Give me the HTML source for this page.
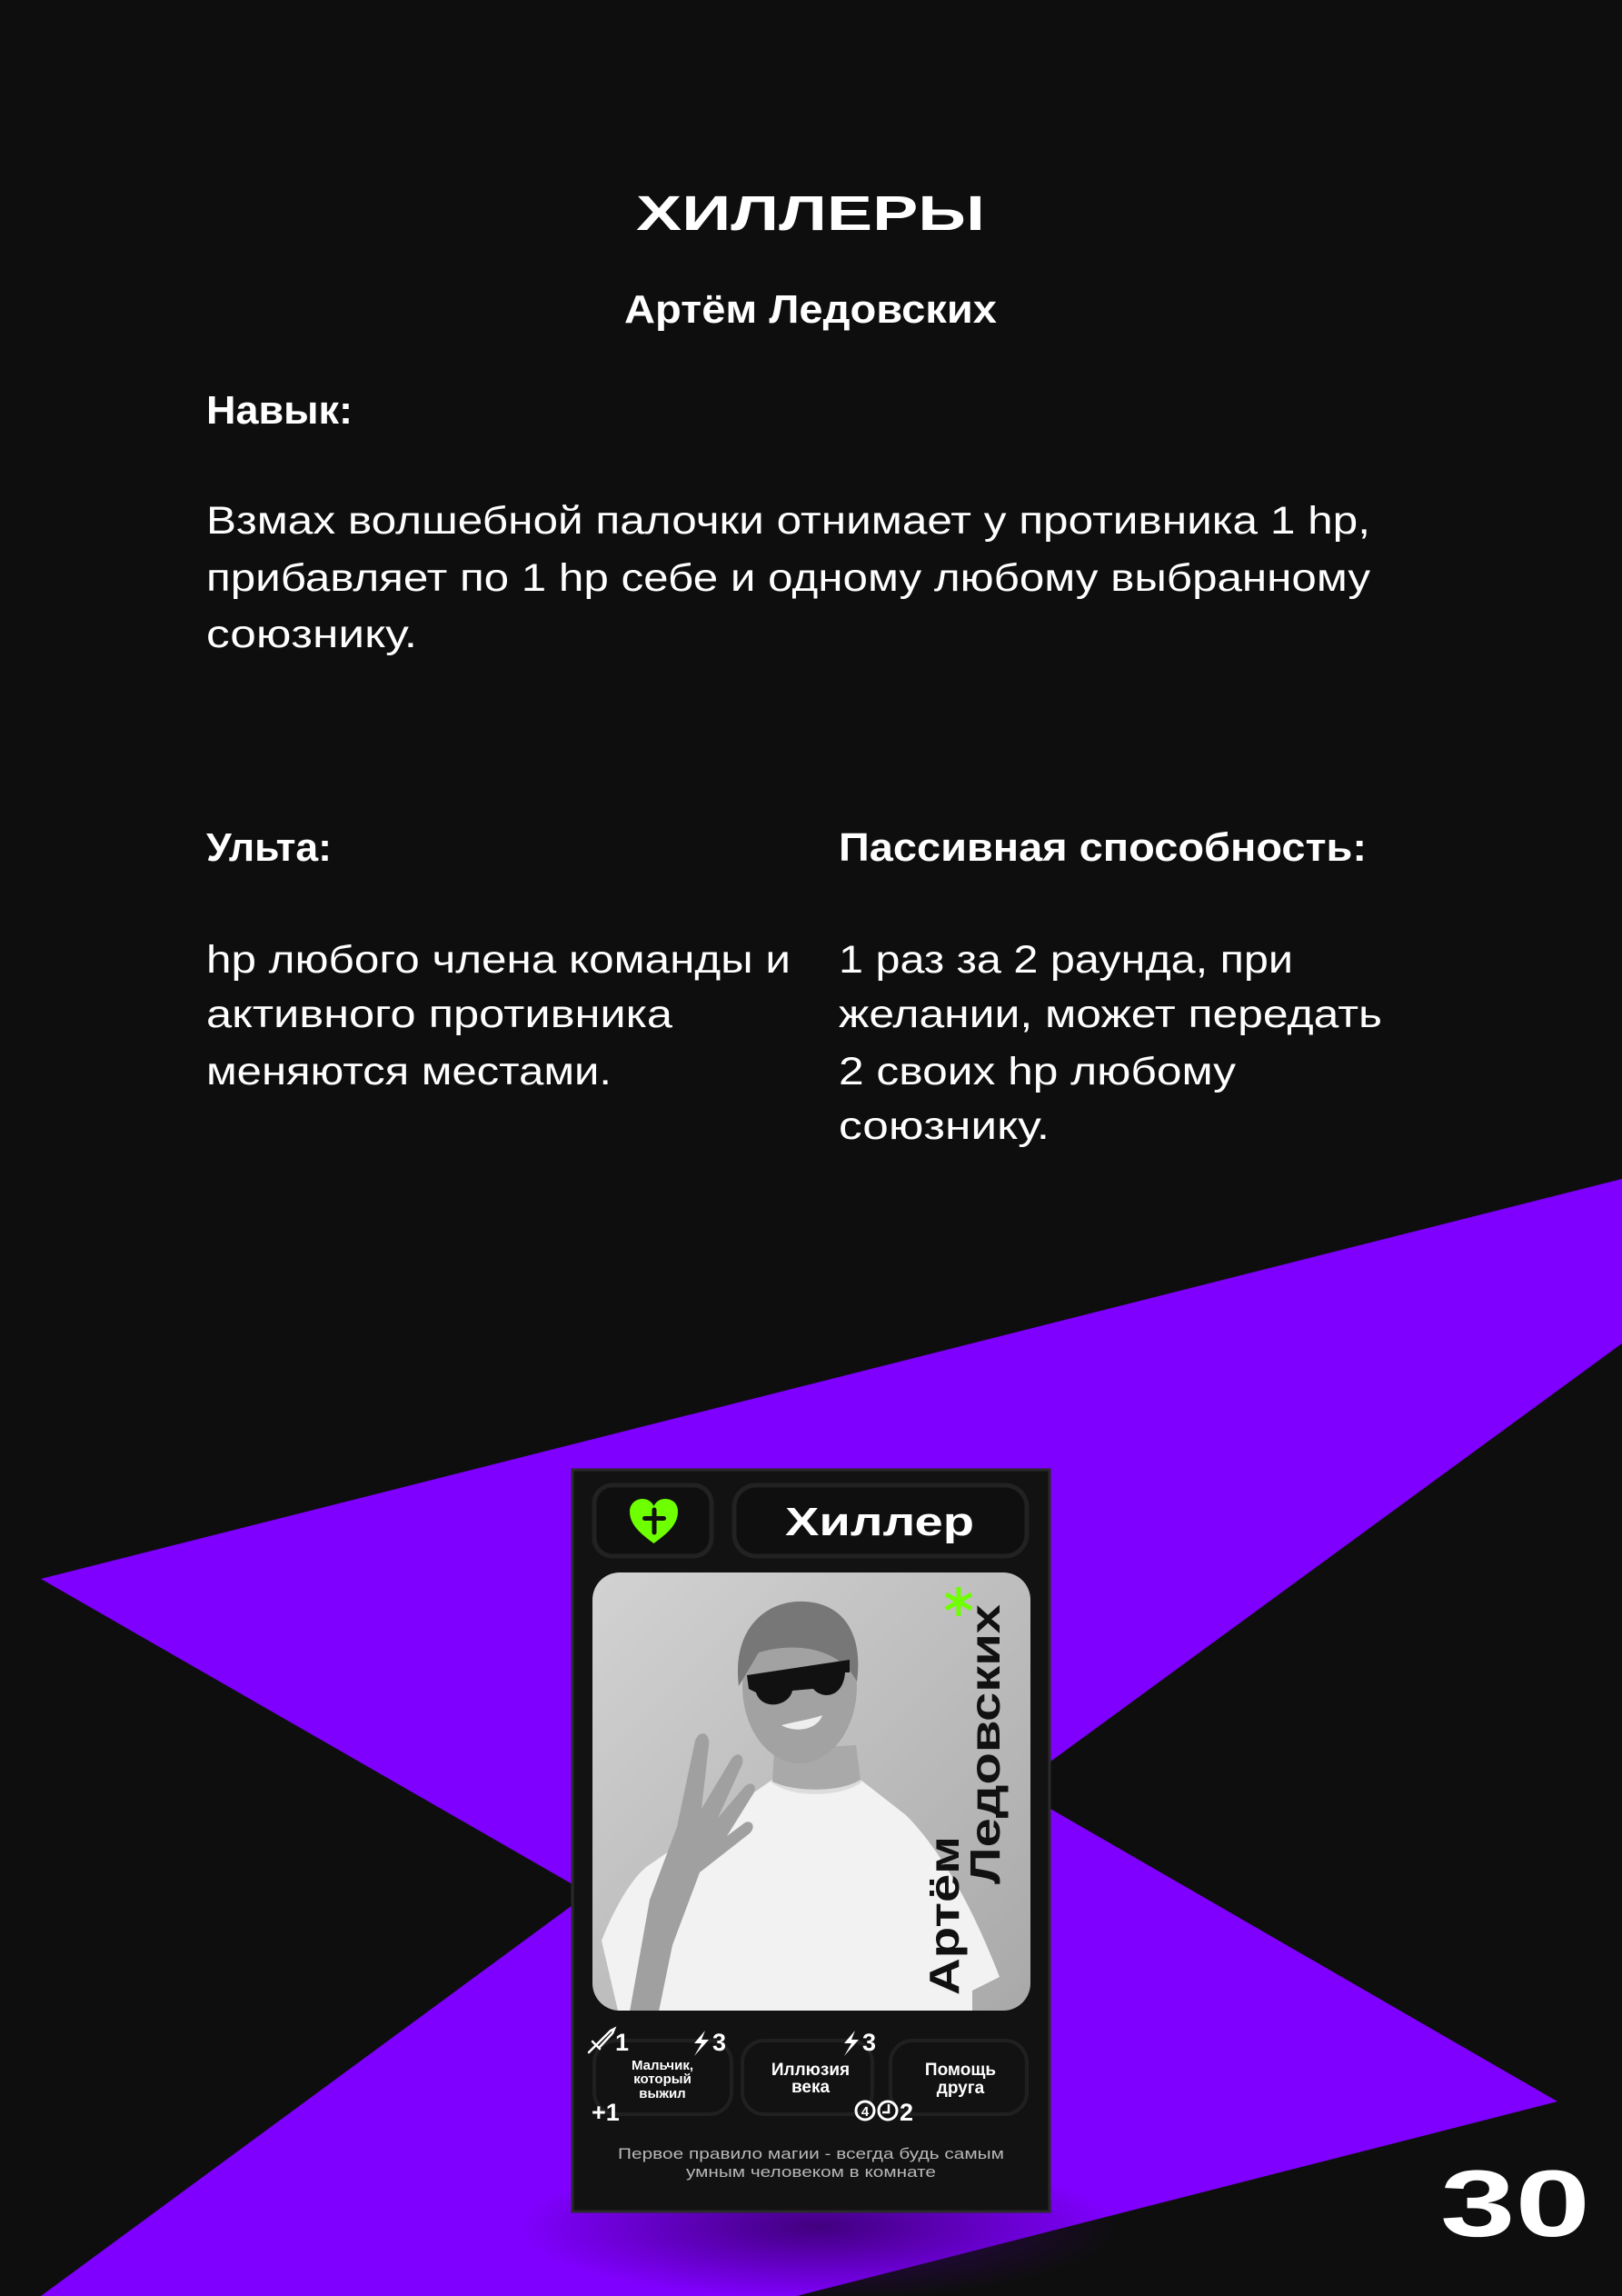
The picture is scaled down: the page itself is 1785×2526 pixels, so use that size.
<!DOCTYPE html>
<html><head><meta charset="utf-8"><style>
html,body{margin:0;padding:0;background:#0e0e0e;}
svg{display:block;}
text{font-family:"Liberation Sans",sans-serif;}
</style></head><body>
<svg width="1785" height="2526" viewBox="0 0 1785 2526" xmlns="http://www.w3.org/2000/svg">
<defs>
<linearGradient id="bg" x1="0" y1="0" x2="1" y2="1">
<stop offset="0" stop-color="#d2d2d2"/><stop offset="1" stop-color="#a9a9a9"/>
</linearGradient>
<clipPath id="ph"><rect x="652" y="1730" width="482" height="482" rx="30"/></clipPath>
<radialGradient id="glow" cx="0.5" cy="0.5" r="0.5">
<stop offset="0" stop-color="#3a0070" stop-opacity="0.9"/><stop offset="1" stop-color="#3a0070" stop-opacity="0"/>
</radialGradient>
</defs>
<rect width="1785" height="2526" fill="#0e0e0e"/>
<polygon points="45,1737 1785,1297 1785,1478 1156,1938 900,2050 630,2073" fill="#8000ff"/>
<polygon points="900,1950 1156,1990 1714,2312 877,2526 45,2526 630,2096" fill="#8000ff"/>
<ellipse cx="900" cy="2450" rx="330" ry="80" fill="url(#glow)"/>

<text x="700" y="253" font-size="54" font-weight="bold" fill="#fff" textLength="384" lengthAdjust="spacingAndGlyphs">ХИЛЛЕРЫ</text>
<text x="687" y="355" font-size="44" font-weight="bold" fill="#fff" textLength="410" lengthAdjust="spacingAndGlyphs">Артём Ледовских</text>
<text x="227" y="466" font-size="44" font-weight="bold" fill="#fff" textLength="161" lengthAdjust="spacingAndGlyphs">Навык:</text>
<g font-size="43" fill="#fff">
<text x="227" y="587" textLength="1281" lengthAdjust="spacingAndGlyphs">Взмах волшебной палочки отнимает у противника 1 hp,</text>
<text x="227" y="650" textLength="1281" lengthAdjust="spacingAndGlyphs">прибавляет по 1 hp себе и одному любому выбранному</text>
<text x="227" y="712" textLength="232" lengthAdjust="spacingAndGlyphs">союзнику.</text>
</g>
<text x="227" y="947" font-size="44" font-weight="bold" fill="#fff" textLength="138" lengthAdjust="spacingAndGlyphs">Ульта:</text>
<text x="923" y="947" font-size="44" font-weight="bold" fill="#fff" textLength="581" lengthAdjust="spacingAndGlyphs">Пассивная способность:</text>
<g font-size="43" fill="#fff">
<text x="227" y="1070" textLength="643" lengthAdjust="spacingAndGlyphs">hp любого члена команды и</text>
<text x="227" y="1130" textLength="513" lengthAdjust="spacingAndGlyphs">активного противника</text>
<text x="227" y="1193" textLength="446" lengthAdjust="spacingAndGlyphs">меняются местами.</text>
<text x="923" y="1070" textLength="500" lengthAdjust="spacingAndGlyphs">1 раз за 2 раунда, при</text>
<text x="923" y="1130" textLength="598" lengthAdjust="spacingAndGlyphs">желании, может передать</text>
<text x="923" y="1193" textLength="437" lengthAdjust="spacingAndGlyphs">2 своих hp любому</text>
<text x="923" y="1253" textLength="232" lengthAdjust="spacingAndGlyphs">союзнику.</text>
</g>

<rect x="630" y="1617" width="525" height="816" fill="#121212" stroke="#2a2a2a" stroke-width="3"/>
<rect x="654" y="1634" width="129" height="78" rx="20" fill="#0f0f0f" stroke="#222" stroke-width="5"/>
<rect x="808" y="1634" width="322" height="78" rx="24" fill="#0f0f0f" stroke="#222" stroke-width="5"/>
<path d="M719.5,1698 C706,1688 693,1678 693,1663 C693,1654 700,1649 707,1649 C713,1649 717,1652 719.5,1657 C722,1652 726,1649 732,1649 C740,1649 746,1654 746,1663 C746,1678 733,1688 719.5,1698 Z" fill="#6eff00"/>
<path d="M720,1661 V1686 M709.5,1670.5 H730.5" stroke="#111" stroke-width="5" stroke-linecap="round"/>
<text x="864" y="1689" font-size="44" font-weight="bold" fill="#fff" textLength="208" lengthAdjust="spacingAndGlyphs">Хиллер</text>

<g clip-path="url(#ph)">
<rect x="652" y="1730" width="482" height="482" fill="url(#bg)"/>
<path d="M850,1958 C870,1972 920,1972 947,1958 L997,1997 C1040,2040 1075,2110 1100,2175 L1070,2190 L1070,2212 L680,2212 L662,2135 C680,2090 700,2060 717,2050 Z" fill="#f2f2f2"/>
<path d="M850,1958 C870,1975 925,1975 947,1958" stroke="#dcdcdc" stroke-width="6" fill="none"/>
<path d="M852,1925 L850,1960 C875,1972 925,1972 947,1958 L942,1920 Z" fill="#a9a9a9"/>
<ellipse cx="880" cy="1855" rx="63" ry="85" fill="#a2a2a2"/>
<path d="M813,1855 C805,1790 845,1760 885,1762 C930,1764 950,1800 943,1850 C925,1815 880,1805 835,1818 Z" fill="#777"/>
<path d="M822,1843 L935,1826 L935,1840 L930,1840 C928,1868 905,1870 895,1858 L872,1860 C868,1878 838,1882 832,1862 L824,1858 Z" fill="#111"/>
<path d="M860,1898 C875,1894 895,1891 905,1887 C900,1903 875,1907 860,1898 Z" fill="#eee"/>
<path d="M693,2213 L715,2090 L745,2010 L765,1915 C770,1902 782,1906 780,1920 L772,1990 L805,1935 C812,1925 822,1932 815,1945 L790,2000 L820,1965 C828,1958 835,1966 828,1975 L800,2020 L820,2005 C828,2002 832,2010 825,2017 L770,2060 L740,2140 L725,2213 Z" fill="#a0a0a0"/>
<text transform="translate(1100,2073) rotate(-90)" font-size="46" font-weight="bold" fill="#111" textLength="308" lengthAdjust="spacingAndGlyphs">Ледовских</text>
<text transform="translate(1055,2195) rotate(-90)" font-size="46" font-weight="bold" fill="#111" textLength="175" lengthAdjust="spacingAndGlyphs">Артём</text>
<path d="M1055,1746 V1778 M1041,1754 L1069,1770 M1069,1754 L1041,1770" stroke="#6eff00" stroke-width="5"/>
</g>

<rect x="654" y="2245" width="151" height="81" rx="24" fill="none" stroke="#202020" stroke-width="4"/>
<rect x="817" y="2245" width="143" height="81" rx="24" fill="none" stroke="#202020" stroke-width="4"/>
<rect x="980" y="2245" width="150" height="81" rx="24" fill="none" stroke="#202020" stroke-width="4"/>
<path d="M648,2258 L652,2254 M650,2256 L656,2250 M652,2246 L660,2254 M656,2250 L672,2234 L676,2232 L674,2237 L660,2252" stroke="#fff" stroke-width="2.5" fill="none" stroke-linecap="round"/>
<g font-weight="bold" fill="#fff" font-size="27">
<text x="677" y="2256">1</text>
<text x="784" y="2256">3</text>
<text x="949" y="2256">3</text>
<text x="651" y="2333">+1</text>
<text x="990" y="2333">2</text>
</g>
<path d="M776,2234 L764,2248 L772,2248 L764,2262 L780,2244 L772,2244 Z" fill="#fff"/>
<path d="M941,2234 L929,2248 L937,2248 L929,2262 L945,2244 L937,2244 Z" fill="#fff"/>
<circle cx="952" cy="2322" r="10" fill="none" stroke="#fff" stroke-width="3"/>
<text x="952" y="2328" font-size="15" font-weight="bold" fill="#fff" text-anchor="middle">4</text>
<circle cx="977" cy="2322" r="10" fill="none" stroke="#fff" stroke-width="3"/>
<path d="M978,2315 V2324 H971" stroke="#fff" stroke-width="2.5" fill="none"/>
<g font-weight="bold" fill="#fff" text-anchor="middle">
<text x="729" y="2277" font-size="15">Мальчик,</text>
<text x="729" y="2292" font-size="15">который</text>
<text x="729" y="2308" font-size="15">выжил</text>
<text x="892" y="2283" font-size="19">Иллюзия</text>
<text x="892" y="2302" font-size="19">века</text>
<text x="1057" y="2283" font-size="19">Помощь</text>
<text x="1057" y="2303" font-size="19">друга</text>
</g>
<text x="680" y="2375" font-size="17" fill="#b8b8b8" textLength="425" lengthAdjust="spacingAndGlyphs">Первое правило магии - всегда будь самым</text>
<text x="755" y="2395" font-size="17" fill="#b8b8b8" textLength="275" lengthAdjust="spacingAndGlyphs">умным человеком в комнате</text>

<text x="1585" y="2460" font-size="104" font-weight="bold" fill="#fff" textLength="165" lengthAdjust="spacingAndGlyphs">30</text>
</svg>
</body></html>
